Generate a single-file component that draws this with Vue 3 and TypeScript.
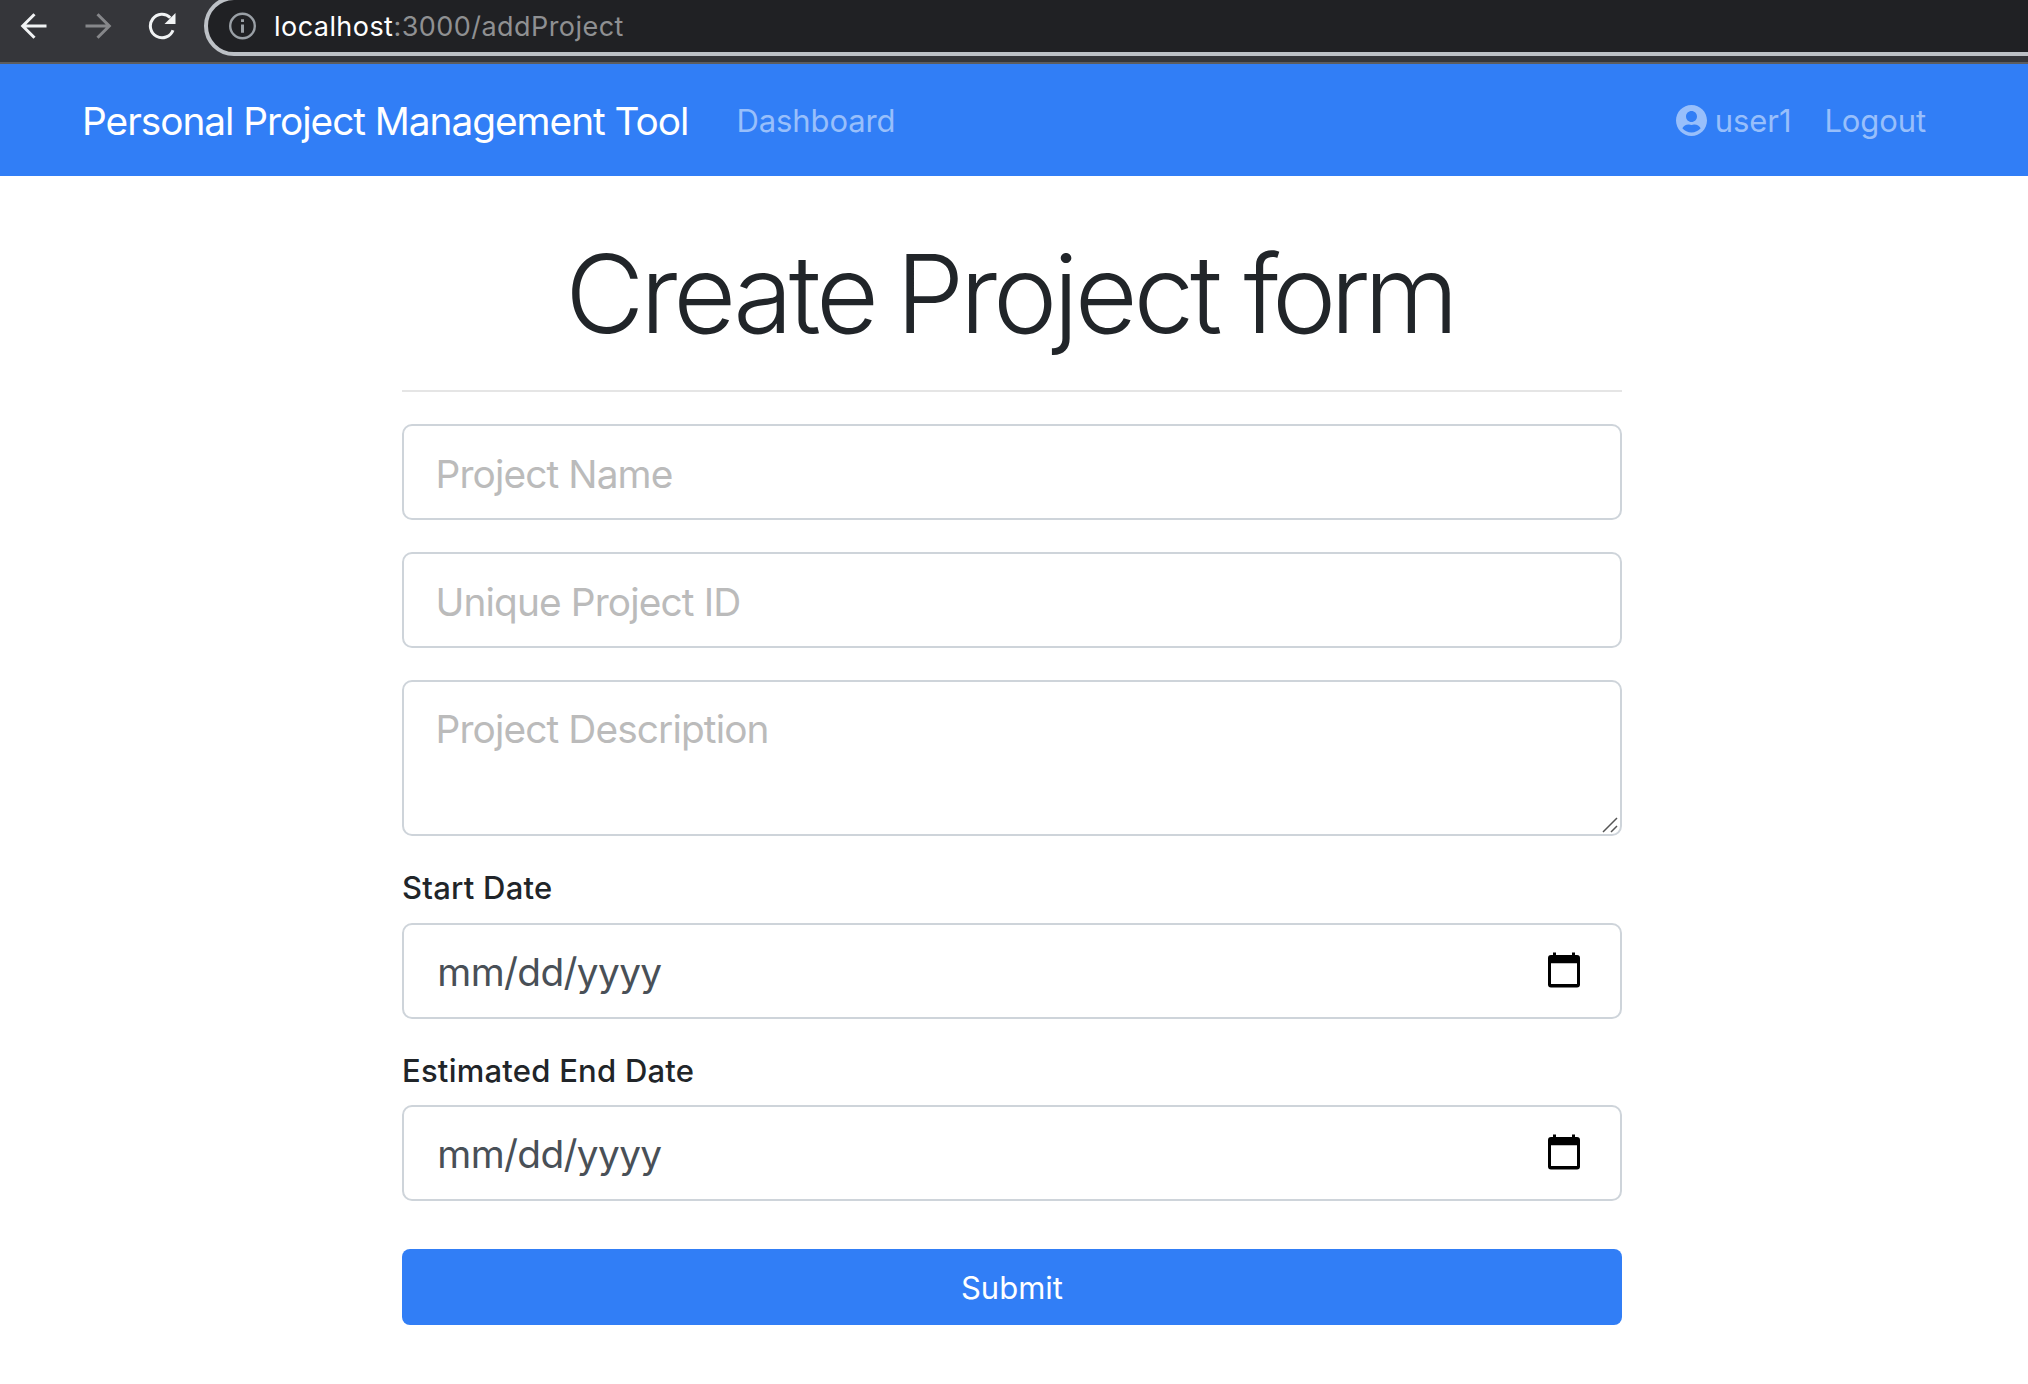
<script setup lang="ts">
interface Field {
  id: string
  kind: 'text' | 'area' | 'date'
  hint: string
  label?: string
}

const fields: Field[] = [
  { id: 'name', kind: 'text', hint: 'Project Name' },
  { id: 'identifier', kind: 'text', hint: 'Unique Project ID' },
  { id: 'description', kind: 'area', hint: 'Project Description' },
  { id: 'start', kind: 'date', hint: 'mm/dd/yyyy', label: 'Start Date' },
  { id: 'end', kind: 'date', hint: 'mm/dd/yyyy', label: 'Estimated End Date' },
]
</script>

<template>
  <div class="page">
    <header class="chrome">
      <svg class="tool back" viewBox="0 0 28 28" aria-hidden="true">
        <path d="M26.500 14H3M14.500 2.200 2.700 14 14.500 25.800" />
      </svg>
      <svg class="tool forward" viewBox="0 0 28 28" aria-hidden="true">
        <path d="M1.500 14h23M13.500 2.200 25.300 14 13.500 25.800" />
      </svg>
      <svg class="tool reload" viewBox="0 0 28 28" aria-hidden="true">
        <path d="M25 18.2A11.7 11.7 0 1 1 22.3 5.7" />
        <path class="solid" d="M27.5 1v11h-11z" />
      </svg>
      <div class="omnibox">
        <svg class="info" viewBox="0 0 28 28" aria-hidden="true">
          <circle cx="13.500" cy="14" r="12.3" fill="none" stroke="#9aa0a6" stroke-width="2.4" />
          <path d="M12 7.3h3v2.8h-3zM12 12.4h3v8.4h-3z" fill="#9aa0a6" />
        </svg>
        <span class="url"><b>localhost</b>:3000/addProject</span>
      </div>
    </header>

    <nav class="navbar">
      <a class="brand">Personal Project Management Tool</a>
      <a class="link dash">Dashboard</a>
      <a class="link user">
        <svg viewBox="0 0 496 496" aria-hidden="true">
          <path
            d="M248 0C111 0 0 111 0 248s111 248 248 248 248-111 248-248S385 0 248 0zm0 96c48.600 0 88 39.400 88 88s-39.400 88-88 88-88-39.400-88-88 39.400-88 88-88zm0 344c-58.700 0-111.300-26.600-146.500-68.200 18.800-35.400 55.600-59.800 98.500-59.800 2.400 0 4.800.4 7.100 1.100 13 4.200 26.600 6.900 40.900 6.900s28-2.700 40.900-6.900c2.300-.7 4.700-1.100 7.100-1.100 42.900 0 79.700 24.400 98.500 59.800C359.300 413.400 306.700 440 248 440z"
          />
        </svg>
        <span>user1</span>
      </a>
      <a class="link logout">Logout</a>
    </nav>

    <main class="content">
      <h1>Create Project <span>form</span></h1>
      <hr />
      <form>
        <div v-for="f in fields" :key="f.id" class="group" :class="f.id">
          <div v-if="f.label" class="label">{{ f.label }}</div>
          <div class="control" :class="f.kind">
            <span class="hint">{{ f.hint }}</span>
            <svg v-if="f.kind === 'area'" class="grip" viewBox="0 0 16 16" aria-hidden="true">
              <path d="M1 15 15 1M9 15l6-6" />
            </svg>
            <svg v-if="f.kind === 'date'" class="calendar" viewBox="0 0 32 36" aria-hidden="true">
              <path
                fill-rule="evenodd"
                d="M5 .5h3V3h16V.5h3V3h2a3 3 0 0 1 3 3v26.500a3 3 0 0 1-3 3H3a3 3 0 0 1-3-3V6a3 3 0 0 1 3-3h2zM3 11.300v20.700h26V11.300z"
              />
            </svg>
          </div>
        </div>
        <button type="button">Submit</button>
      </form>
    </main>
  </div>
</template>

<style>
body {
  margin: 0;
  background: #fff;
}
</style>

<style scoped>
.page {
  width: 2028px;
  height: 1384px;
  overflow: hidden;
  background: #fff;
  color: #212529;
  font-family: Inter, 'Liberation Sans', sans-serif;
}
.chrome {
  display: flex;
  height: 62px;
  background: #35363a;
  border-bottom: 2px solid #5c5d5f;
  overflow: hidden;
}
.tool {
  flex: none;
  width: 28px;
  height: 28px;
  margin-top: 12px;
  fill: none;
  stroke: #f1f3f4;
  stroke-width: 3;
}
.back { margin-left: 20px; }
.forward { margin-left: 36px; stroke: #86878a; }
.reload { margin-left: 36px; }
.reload .solid { fill: #f1f3f4; stroke: none; }
.omnibox {
  box-sizing: border-box;
  flex: none;
  display: flex;
  align-items: center;
  width: 1900px;
  height: 60px;
  margin: -4px 0 0 28px;
  padding-left: 21px;
  border: 4px solid #bdc1c6;
  border-radius: 30px;
  background: #202124;
}
.info { width: 28px; height: 28px; }
.url {
  margin-left: 17px;
  padding-top: 1px;
  font-size: 27px;
  line-height: 40px;
  letter-spacing: 0.45px;
  color: #8f9092;
}
.url b { font-weight: 400; color: #fff; }
.navbar {
  box-sizing: border-box;
  display: flex;
  align-items: center;
  height: 112px;
  padding: 0 102px 0 82px;
  background: #317ef6;
  white-space: nowrap;
}
.brand {
  width: 606px;
  font-size: 38.800px;
  letter-spacing: -1.03px;
  color: #fff;
}
.link {
  font-size: 31px;
  padding-top: 1px;
  letter-spacing: -0.1px;
  color: #98bffb;
}
.dash { margin-left: 48.500px; }
.user {
  display: flex;
  align-items: center;
  margin-left: auto;
}
.user svg { width: 31px; height: 31px; margin-bottom: 1px; fill: currentColor; }
.user span { margin-left: 8px; }
.logout { margin-left: 33px; }
.content {
  width: 1220px;
  margin-left: 402px;
}
h1 {
  box-sizing: border-box;
  margin: 0;
  padding: 51px 6px 0 0;
  height: 214px;
  text-align: center;
  font-size: 108.600px;
  line-height: 134px;
  font-weight: 300;
  letter-spacing: -4.150px;
  word-spacing: -5.200px;
  white-space: nowrap;
}
h1 span {
  margin-left: 4px;
  letter-spacing: -6.200px;
}
hr {
  margin: 0 0 32px;
  border: 0;
  height: 2px;
  background: #e5e5e5;
}
.group { margin-bottom: 32px; }
.label {
  height: 55px;
  font-size: 31px;
  line-height: 40px;
  font-weight: 500;
  letter-spacing: 0.24px;
}
.end .label { height: 54px; }
.control {
  box-sizing: border-box;
  display: flex;
  align-items: center;
  height: 96px;
  padding: 0 40px 0 32px;
  border: 2px solid #ced4da;
  border-radius: 10px;
}
.hint {
  margin-left: -0.500px;
  font-size: 38.800px;
  line-height: 48px;
  letter-spacing: -0.87px;
  color: #bbb;
  white-space: nowrap;
}
.text .hint { padding-top: 4px; }
.area { height: 156px; align-items: flex-start; }
.area .hint { margin-top: 23px; }
.date .hint {
  padding-top: 1px;
  margin-left: 1.300px;
  letter-spacing: -0.65px;
  color: #495057;
}
.grip {
  width: 16px;
  height: 16px;
  margin: 0 -38px 1px auto;
  align-self: flex-end;
  fill: none;
  stroke: #555;
  stroke-width: 1.500;
}
.calendar { width: 32px; height: 36px; margin: 0 0 2px auto; }
button {
  display: block;
  width: 100%;
  height: 76px;
  margin-top: 48px;
  padding: 1px 0 0;
  border: 0;
  border-radius: 8px;
  background: #317ef6;
  color: #fff;
  font: 400 31px Inter, 'Liberation Sans', sans-serif;
}
</style>
